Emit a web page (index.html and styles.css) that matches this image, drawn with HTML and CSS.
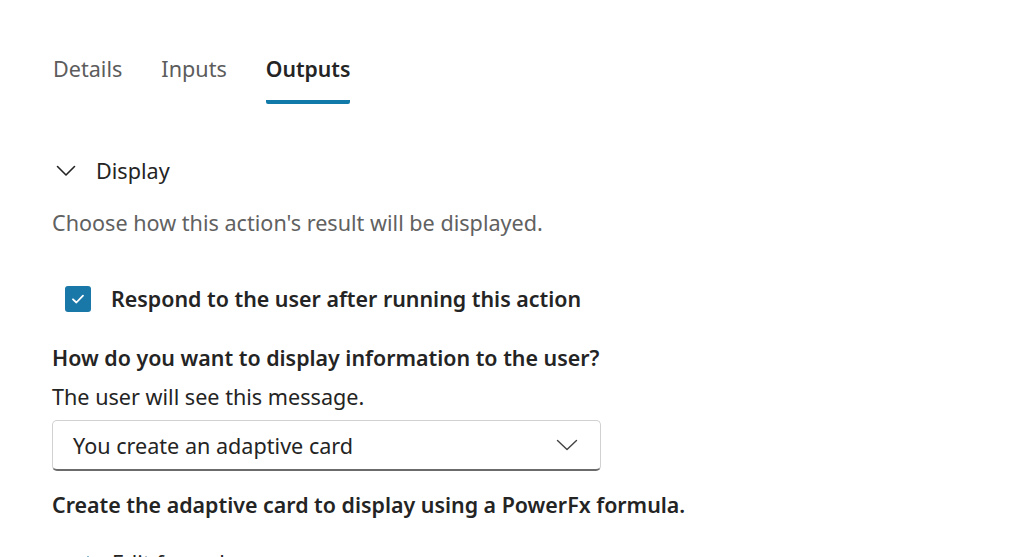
FILE: index.html
```html
<!DOCTYPE html>
<html lang="en">
<head>
    <meta charset="UTF-8">
    <meta name="viewport" content="width=device-width, initial-scale=1.0">
    <title>Action Outputs</title>
    <link rel="stylesheet" href="styles.css">
</head>
<body>
    <div class="panel">
        <!-- Tabs -->
        <div class="tabs">
            <div class="tab">Details</div>
            <div class="tab">Inputs</div>
            <div class="tab active">Outputs</div>
        </div>

        <!-- Display section -->
        <div class="section-head">
            <svg class="chevron" width="20" height="12" viewBox="0 0 20 12">
                <path d="M1.5 1.5 L10 10 L18.5 1.5" fill="none" stroke="#242424" stroke-width="1.6" stroke-linecap="round" stroke-linejoin="round"/>
            </svg>
            <span>Display</span>
        </div>

        <p class="hint">Choose how this action's result will be displayed.</p>

        <label class="check-row">
            <span class="checkbox">
                <svg width="14" height="12" viewBox="0 0 14 12">
                    <path d="M2 6.3 L5.4 9.5 L12 2.6" fill="none" stroke="#fff" stroke-width="1.8" stroke-linecap="round" stroke-linejoin="round"/>
                </svg>
            </span>
            <span class="check-label">Respond to the user after running this action</span>
        </label>

        <div class="field">
            <div class="field-title">How do you want to display information to the user?</div>
            <div class="field-desc">The user will see this message.</div>
            <div class="dropdown">
                <span>You create an adaptive card</span>
                <svg width="22" height="12" viewBox="0 0 22 12">
                    <path d="M1.5 1.5 L11 10.5 L20.5 1.5" fill="none" stroke="#424242" stroke-width="1.4" stroke-linecap="round" stroke-linejoin="round"/>
                </svg>
            </div>
        </div>

        <div class="field-title formula-title">Create the adaptive card to display using a PowerFx formula.</div>

        <div class="edit-row">
            <svg width="16" height="16" viewBox="0 0 16 16">
                <path d="M12 2 L4 14" fill="none" stroke="#1a78a8" stroke-width="1.6" stroke-linecap="round"/>
            </svg>
            <span>Edit formula</span>
            <svg width="14" height="10" viewBox="0 0 14 10">
                <path d="M1.5 2 L7 8 L12.5 2" fill="none" stroke="#424242" stroke-width="1.4" stroke-linecap="round"/>
            </svg>
        </div>
    </div>
</body>
</html>
```

FILE: styles.css
```css
body {
    margin: 0;
    font-family: "Noto Sans", "Open Sans", sans-serif;
    font-size: 21.6px;
    color: #242424;
    background: #fff;
    overflow: hidden;
}

.panel {
    padding: 53px 52px 0 52px;
}

.tabs {
    display: flex;
    gap: 39px;
    padding-left: 1px;
}

.tab {
    color: #5c5c5c;
    padding-bottom: 15px;
    border-bottom: 4px solid transparent;
    border-radius: 2px;
    line-height: 32px;
}

.tab.active {
    color: #242424;
    font-weight: 600;
    font-size: 21.2px;
    border-bottom-color: #117aa8;
}

.section-head {
    display: flex;
    align-items: center;
    gap: 20px;
    margin-top: 51px;
    padding-left: 4px;
    line-height: 32px;
}

.hint {
    color: #616161;
    margin: 20px 0 0 0;
    line-height: 32px;
}

.check-row {
    display: flex;
    align-items: center;
    gap: 20px;
    margin-top: 44px;
    padding-left: 13px;
    line-height: 32px;
}

.checkbox {
    width: 26px;
    height: 26px;
    background: #1a78a8;
    border-radius: 3px;
    display: flex;
    align-items: center;
    justify-content: center;
}

.check-label,
.field-title {
    font-weight: 600;
    font-size: 21.4px;
}

.field {
    margin-top: 27px;
}

.field-title {
    line-height: 32px;
}

.field-desc {
    line-height: 32px;
    margin-top: 7px;
}

.dropdown {
    margin-top: 7px;
    width: 549px;
    height: 51px;
    box-sizing: border-box;
    border: 1px solid #d1d1d1;
    border-bottom: 2px solid #6b6b6b;
    border-radius: 5px;
    display: flex;
    align-items: center;
    justify-content: space-between;
    padding: 0 22px 0 20px;
}

.formula-title {
    margin-top: 18px;
}

.edit-row {
    display: flex;
    align-items: center;
    gap: 20px;
    margin-top: 26px;
    padding-left: 24px;
    line-height: 32px;
}
```
